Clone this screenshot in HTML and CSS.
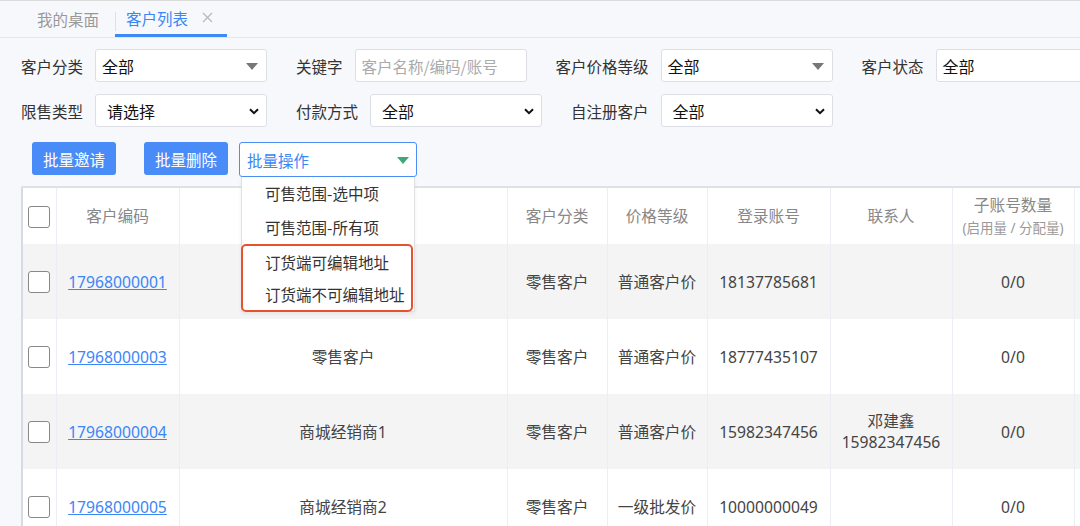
FILE: index.html
```html
<!DOCTYPE html>
<html lang="zh-CN">
<head>
  <meta charset="UTF-8">
  <title>客户列表</title>
  <link rel="stylesheet" href="styles.css">
</head>
<body>

  <div class="tabs">
    <span class="tab">我的桌面</span>
    <span class="tab active">客户列表
      <svg class="close" width="11" height="11" viewBox="0 0 11 11"><path d="M1 1 L10 10 M10 1 L1 10" stroke="#bbb" stroke-width="1.4"/></svg>
    </span>
  </div>

  <div class="filters">
    <div class="filter-row">
      <div class="field">
        <label>客户分类</label>
        <div class="control">全部<span class="tri"></span></div>
      </div>
      <div class="field">
        <label>关键字</label>
        <div class="control input">客户名称/编码/账号</div>
      </div>
      <div class="field">
        <label>客户价格等级</label>
        <div class="control">全部<span class="tri"></span></div>
      </div>
      <div class="field">
        <label>客户状态</label>
        <div class="control">全部<span class="tri"></span></div>
      </div>
    </div>
    <div class="filter-row">
      <div class="field">
        <label>限售类型</label>
        <div class="control native">请选择<svg class="chev" width="10" height="7" viewBox="0 0 10 7"><path d="M1 1.2 L5 5.2 L9 1.2" fill="none" stroke="#111" stroke-width="2"/></svg></div>
      </div>
      <div class="field">
        <label>付款方式</label>
        <div class="control native">全部<svg class="chev" width="10" height="7" viewBox="0 0 10 7"><path d="M1 1.2 L5 5.2 L9 1.2" fill="none" stroke="#111" stroke-width="2"/></svg></div>
      </div>
      <div class="field">
        <label>自注册客户</label>
        <div class="control native">全部<svg class="chev" width="10" height="7" viewBox="0 0 10 7"><path d="M1 1.2 L5 5.2 L9 1.2" fill="none" stroke="#111" stroke-width="2"/></svg></div>
      </div>
    </div>
  </div>

  <div class="toolbar">
    <button class="btn">批量邀请</button>
    <button class="btn">批量删除</button>
    <div class="batch">
      <div class="batch-select">批量操作<span class="tri green"></span></div>
      <div class="menu">
        <div class="item">可售范围-选中项</div>
        <div class="item">可售范围-所有项</div>
        <div class="mark">
          <div class="item">订货端可编辑地址</div>
          <div class="item">订货端不可编辑地址</div>
        </div>
      </div>
    </div>
  </div>

  <table class="grid">
    <colgroup>
      <col style="width:34px"><col style="width:123px"><col style="width:328px"><col style="width:100px">
      <col style="width:100px"><col style="width:123px"><col style="width:122px"><col style="width:122px"><col style="width:100px">
    </colgroup>
    <thead>
      <tr>
        <th><span class="check"></span></th>
        <th>客户编码</th>
        <th></th>
        <th>客户分类</th>
        <th>价格等级</th>
        <th>登录账号</th>
        <th>联系人</th>
        <th>子账号数量<br><small>(启用量 / 分配量)</small></th>
        <th></th>
      </tr>
    </thead>
    <tbody>
      <tr>
        <td><span class="check"></span></td>
        <td><a href="#">17968000001</a></td>
        <td></td>
        <td>零售客户</td>
        <td>普通客户价</td>
        <td>18137785681</td>
        <td></td>
        <td>0/0</td>
        <td></td>
      </tr>
      <tr>
        <td><span class="check"></span></td>
        <td><a href="#">17968000003</a></td>
        <td>零售客户</td>
        <td>零售客户</td>
        <td>普通客户价</td>
        <td>18777435107</td>
        <td></td>
        <td>0/0</td>
        <td></td>
      </tr>
      <tr>
        <td><span class="check"></span></td>
        <td><a href="#">17968000004</a></td>
        <td>商城经销商1</td>
        <td>零售客户</td>
        <td>普通客户价</td>
        <td>15982347456</td>
        <td class="two">邓建鑫<br>15982347456</td>
        <td>0/0</td>
        <td></td>
      </tr>
      <tr>
        <td><span class="check"></span></td>
        <td><a href="#">17968000005</a></td>
        <td>商城经销商2</td>
        <td>零售客户</td>
        <td>一级批发价</td>
        <td>10000000049</td>
        <td></td>
        <td>0/0</td>
        <td></td>
      </tr>
    </tbody>
  </table>

</body>
</html>
```

FILE: styles.css
```css
body {
  margin: 0;
  background-color: #f6f8fc;
  font-family: "Noto Sans CJK SC", "Noto Sans", sans-serif;
  font-size: 15.5px;
  color: #333;
  overflow: hidden;
}

.tabs {
  height: 36px;
  border-top: 1px solid #dcdcdc;
  border-bottom: 1px solid #e4e7ed;
  display: flex;
  align-items: stretch;
  padding-left: 37px;
}

.tab {
  display: flex;
  align-items: center;
  color: #999;
  padding-right: 16px;
  position: relative;
}

.tab.active {
  color: #3b86f5;
  padding: 0 14px 0 11px;
  border-bottom: 3px solid #3d8af7;
  height: 33px;
}

.tab.active::before {
  content: "";
  position: absolute;
  left: 0;
  top: 11px;
  height: 19px;
  border-left: 1px solid #e0e0e0;
}

.close {
  margin-left: 14px;
}

.filters {
  padding: 11px 0 0 21px;
}

.filter-row {
  display: flex;
  margin-bottom: 12px;
}

.field {
  display: flex;
  align-items: center;
  margin-right: 29px;
}

.field label {
  color: #333;
  margin-right: 12px;
  white-space: nowrap;
}

.control {
  width: 172px;
  height: 33px;
  box-sizing: border-box;
  background: white;
  border: 1px solid #dcdfe6;
  border-radius: 3px;
  padding-left: 6px;
  display: flex;
  align-items: center;
  position: relative;
  color: #111;
  font-size: 16px;
}

.control.input {
  color: #aaa;
  font-size: 15.5px;
}

.control.native {
  padding-left: 11px;
}

.tri {
  position: absolute;
  right: 8px;
  top: 13px;
  width: 0;
  height: 0;
  border-left: 6px solid transparent;
  border-right: 6px solid transparent;
  border-top: 7px solid #777;
}

.chev {
  position: absolute;
  right: 7px;
  top: 13px;
}

.toolbar {
  display: flex;
  align-items: flex-start;
  padding-left: 32px;
  margin-top: 15px;
}

.btn {
  width: 84px;
  height: 33px;
  border: none;
  border-radius: 3px;
  background-color: #4a8cf7;
  color: white;
  font-family: inherit;
  font-size: 15.5px;
  margin-right: 28px;
  padding: 0;
}

.btn + .btn {
  margin-right: 11px;
}

.batch {
  position: relative;
}

.batch-select {
  width: 178px;
  height: 35px;
  box-sizing: border-box;
  background: white;
  border: 1px solid #4a8ef6;
  border-radius: 3px;
  color: #3d86f6;
  padding-left: 7px;
  display: flex;
  align-items: center;
  position: relative;
}

.tri.green {
  border-top-color: #3fa878;
  right: 7px;
  top: 14px;
}

.menu {
  position: absolute;
  top: 35px;
  left: 2px;
  width: 174px;
  box-sizing: border-box;
  background: white;
  border: 1px solid #e0e0e0;
  border-top: none;
  box-shadow: 0 2px 4px rgba(0,0,0,0.06);
  z-index: 5;
}

.item {
  height: 33.5px;
  line-height: 33.5px;
  padding-left: 23px;
  color: #333;
  white-space: nowrap;
}

.mark {
  border: 2px solid #e8532f;
  border-radius: 5px;
  margin: 0 1px -1px -1px;
}

.mark .item {
  height: 32px;
  line-height: 32px;
  padding-left: 22px;
}

.grid {
  margin: 9px 0 0 21px;
  border-collapse: collapse;
  table-layout: fixed;
  width: 1153px;
  border-top: 2px solid #dde1e8;
  border-left: 2px solid #d6dbe3;
  font-family: "Noto Sans", "Noto Sans CJK SC", sans-serif;
  font-size: 15.7px;
}

.grid th,
.grid td {
  border-right: 1px solid #ebeef2;
  text-align: center;
  padding: 0;
  white-space: nowrap;
}

.grid th {
  height: 56px;
  background: white;
  color: #888;
  font-weight: normal;
  line-height: 22px;
}

.grid th small {
  font-size: 13.5px;
  color: #999;
}

.grid td {
  height: 75px;
  color: #444;
  background: white;
}

.grid tbody tr:nth-child(odd) td {
  background: #f4f4f4;
}

.grid td.two {
  line-height: 21px;
}

.grid a {
  color: #3d86f6;
  text-decoration: underline;
}

.check {
  display: inline-block;
  width: 22px;
  height: 22px;
  box-sizing: border-box;
  border: 1.5px solid #888;
  border-radius: 3px;
  background: white;
  vertical-align: middle;
}
```
